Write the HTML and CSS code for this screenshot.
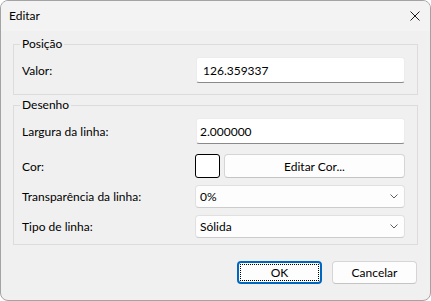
FILE: index.html
```html
<!DOCTYPE html>
<html lang="pt">
<head>
<meta charset="utf-8">
<title>Editar</title>
<link rel="stylesheet" href="styles.css">
</head>
<body>
<div class="window">
  <div class="titlebar">
    <span class="title">Editar</span>
    <span class="close">
      <svg width="10" height="10" viewBox="0 0 10 10"><path d="M0.5 0.5 L9.5 9.5 M9.5 0.5 L0.5 9.5" stroke="#1b1b1b" stroke-width="1" fill="none"/></svg>
    </span>
  </div>
  <div class="content">
    <fieldset class="group g1">
      <legend>Posição</legend>
      <div class="row row-first">
        <span class="label">Valor:</span>
        <div class="input">126.359337</div>
      </div>
    </fieldset>
    <fieldset class="group g2">
      <legend>Desenho</legend>
      <div class="row row-first">
        <span class="label">Largura da linha:</span>
        <div class="input input-tight">2.000000</div>
      </div>
      <div class="row row-color">
        <span class="label">Cor:</span>
        <div class="colorctl">
          <div class="swatch"></div>
          <div class="btn btn-color">Editar Cor...</div>
        </div>
      </div>
      <div class="row row-drop">
        <span class="label">Transparência da linha:</span>
        <div class="combo"><span>0%</span><svg class="chev" width="8" height="5" viewBox="0 0 8 5"><path d="M0.5 0.5 L4 4 L7.5 0.5" stroke="#5f5f5f" stroke-width="1" fill="none"/></svg></div>
      </div>
      <div class="row row-drop">
        <span class="label">Tipo de linha:</span>
        <div class="combo"><span>Sólida</span><svg class="chev" width="8" height="5" viewBox="0 0 8 5"><path d="M0.5 0.5 L4 4 L7.5 0.5" stroke="#5f5f5f" stroke-width="1" fill="none"/></svg></div>
      </div>
    </fieldset>
    <div class="buttons">
      <div class="btn btn-ok"><span class="focus">OK</span></div>
      <div class="btn btn-cancel">Cancelar</div>
    </div>
  </div>
</div>
</body>
</html>
```

FILE: styles.css
```css
html, body {
  margin: 0;
  padding: 0;
  background: #ffffff;
}

body {
  font-family: "Lato", "Liberation Sans", sans-serif;
  font-size: 12px;
  color: #000000;
}

.window {
  width: 431px;
  height: 301px;
  box-sizing: border-box;
  border: 1px solid #a3a3a3;
  border-radius: 8px;
  background: #f0f0f0;
  overflow: hidden;
  display: flex;
  flex-direction: column;
}

.titlebar {
  height: 30px;
  flex: none;
  background: #f3f3f3;
  display: flex;
  align-items: center;
  justify-content: space-between;
  padding: 0 10px 0 8px;
}

.title {
  line-height: 16px;
}

.close {
  display: flex;
  width: 10px;
  height: 10px;
}

.content {
  padding: 5px 12px 0 12px;
  display: flex;
  flex-direction: column;
}

.group {
  margin: 0;
  border: 1px solid #dcdcdc;
  padding: 0 12px 11px 8px;
  min-width: 0;
}

.group legend {
  padding: 0 2px;
  margin-left: -2px;
  line-height: 16px;
}

.g2 {
  margin-top: 2px;
  padding-bottom: 6px;
}

.row {
  display: grid;
  grid-template-columns: 174px 1fr;
  align-items: center;
}

.row-first {
  margin-top: 5px;
}

.row-color {
  margin-top: 10px;
}

.row-drop {
  margin-top: 7px;
}

.input {
  height: 26px;
  box-sizing: border-box;
  background: #ffffff;
  border: 1px solid #ececec;
  border-bottom: 1px solid #8a8a8a;
  border-radius: 3px;
  padding: 0 6px;
  display: flex;
  align-items: center;
}

.input-tight {
  padding-left: 3px;
}

.colorctl {
  display: flex;
  gap: 4px;
  margin-left: -1px;
}

.swatch {
  width: 25px;
  height: 24px;
  box-sizing: border-box;
  border: 1px solid #000000;
  border-radius: 3px;
  background: #ffffff;
  flex: none;
}

.btn {
  height: 23px;
  box-sizing: border-box;
  background: #fdfdfd;
  border: 1px solid #d5d5d5;
  border-bottom-color: #c4c4c4;
  border-radius: 4px;
  display: flex;
  align-items: center;
  justify-content: center;
}

.btn-color {
  flex: 1;
  height: 24px;
}

.combo {
  height: 23px;
  box-sizing: border-box;
  margin-left: -1px;
  background: #fdfdfd;
  border: 1px solid #e0e0e0;
  border-bottom-color: #cccccc;
  border-radius: 4px;
  padding: 0 6px 0 4px;
  display: flex;
  align-items: center;
  justify-content: space-between;
}

.chev {
  display: block;
}

.buttons {
  margin-top: 16px;
  padding-right: 1px;
  display: flex;
  justify-content: flex-end;
  gap: 10px;
}

.buttons .btn {
  width: 85px;
}

.btn-ok {
  border: 2px solid #0067c0;
  padding: 1px;
}

.btn-ok .focus {
  flex: 1;
  align-self: stretch;
  border: 1px dotted #000000;
  display: flex;
  align-items: center;
  justify-content: center;
}
```
